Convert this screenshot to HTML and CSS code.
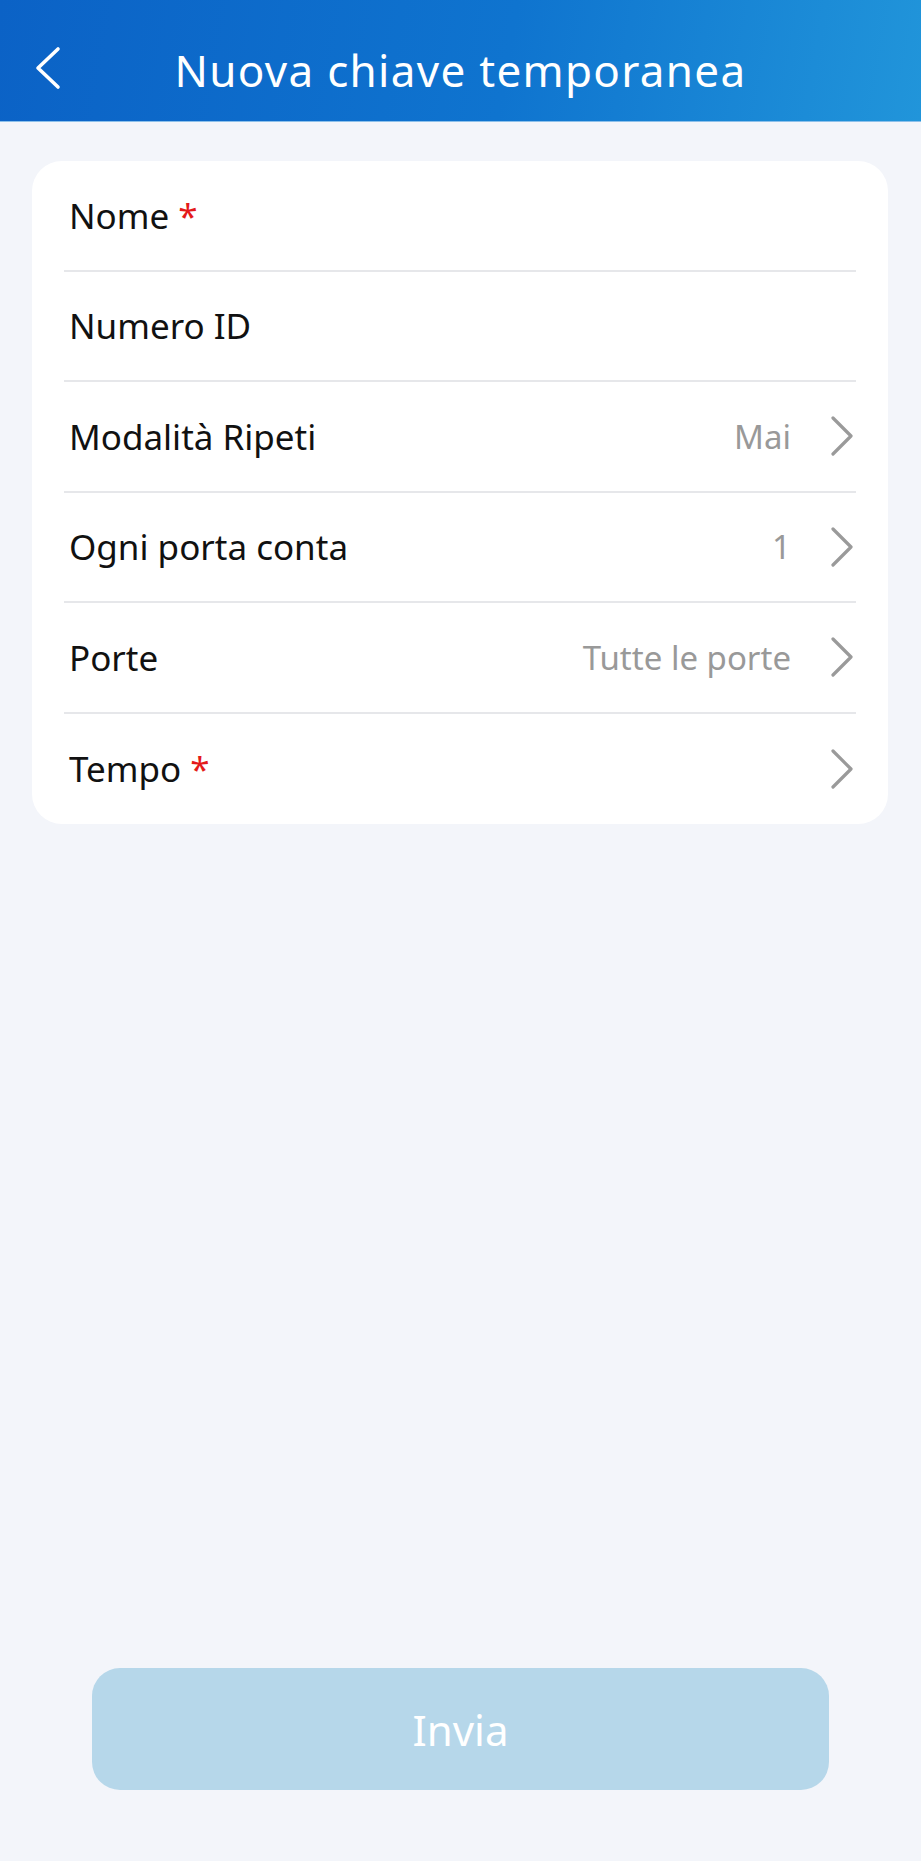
FILE: index.html
```html
<!DOCTYPE html>
<html lang="it">
<head>
<meta charset="utf-8">
<title>Nuova chiave temporanea</title>
<link rel="stylesheet" href="styles.css">
</head>
<body>
<div class="page">
  <header class="topbar">
    <span class="back">
      <svg width="28" height="44" viewBox="0 0 28 44"><polyline points="24,3 4,22 24,41" fill="none" stroke="#fff" stroke-width="3.6" stroke-linecap="round" stroke-linejoin="round"/></svg>
    </span>
    <h1 class="title">Nuova chiave temporanea</h1>
  </header>

  <section class="card">
    <div class="row"><span class="label">Nome <span class="req">*</span></span></div>
    <div class="row"><span class="label">Numero ID</span></div>
    <div class="row"><span class="label">Modalità Ripeti</span><span class="value">Mai</span><span class="chev"><svg width="26" height="40" viewBox="0 0 26 40"><polyline points="4,2 22,20 4,38" fill="none" stroke="#9a9a9a" stroke-width="3.2" stroke-linecap="round" stroke-linejoin="round"/></svg></span></div>
    <div class="row"><span class="label">Ogni porta conta</span><span class="value">1</span><span class="chev"><svg width="26" height="40" viewBox="0 0 26 40"><polyline points="4,2 22,20 4,38" fill="none" stroke="#9a9a9a" stroke-width="3.2" stroke-linecap="round" stroke-linejoin="round"/></svg></span></div>
    <div class="row"><span class="label">Porte</span><span class="value">Tutte le porte</span><span class="chev"><svg width="26" height="40" viewBox="0 0 26 40"><polyline points="4,2 22,20 4,38" fill="none" stroke="#9a9a9a" stroke-width="3.2" stroke-linecap="round" stroke-linejoin="round"/></svg></span></div>
    <div class="row"><span class="label">Tempo <span class="req">*</span></span><span class="value"></span><span class="chev"><svg width="26" height="40" viewBox="0 0 26 40"><polyline points="4,2 22,20 4,38" fill="none" stroke="#9a9a9a" stroke-width="3.2" stroke-linecap="round" stroke-linejoin="round"/></svg></span></div>
  </section>

  <div class="footer">
    <button class="submit" type="button">Invia</button>
  </div>
</div>
</body>
</html>
```
FILE: styles.css
```css
* { box-sizing: border-box; }
html, body { margin: 0; padding: 0; }
body {
  background: #f3f5fa;
  font-family: "Noto Sans", Roboto, "Liberation Sans", sans-serif;
}
.page {
  width: 921px;
  min-height: 1861px;
  display: flex;
  flex-direction: column;
}
.topbar {
  height: 122px;
  padding-top: 18px;
  background: linear-gradient(100deg, #0b62c6 0%, #0f74cf 55%, #2195da 100%);
  display: flex;
  align-items: center;
  position: relative;
  border-bottom: 1px solid #8cc0ea;
}
.back {
  position: absolute;
  left: 34px;
  top: 46px;
  display: flex;
}
.title {
  flex: 1;
  margin: 0;
  text-align: center;
  color: #fff;
  font-weight: 400;
  font-size: 44px;
  letter-spacing: 1.3px;
  line-height: 1;
}
.card {
  margin: 39px 33px 0 32px;
  background: #fff;
  border-radius: 30px;
  padding: 0 32px;
}
.row {
  height: 110.5px;
  display: flex;
  align-items: center;
  border-bottom: 2px solid #e6e7ea;
  font-size: 35px;
  color: #111;
}
.row:last-child { border-bottom: none; }
.label { flex: 1; padding-left: 5px; }
.req { color: #e41a1a; }
.value {
  color: #999;
  font-size: 33px;
  margin-right: 38px;
}
.chev { display: flex; margin-right: 1px; }
.footer {
  margin-top: auto;
  padding: 0 92px 71px 92px;
}
.submit {
  width: 737px;
  height: 122px;
  border: none;
  border-radius: 28px;
  background: #b6d7ea;
  color: #fff;
  font-family: "Noto Sans", Roboto, "Liberation Sans", sans-serif;
  font-size: 42px;
  font-weight: 400;
  padding: 0;
}
```
